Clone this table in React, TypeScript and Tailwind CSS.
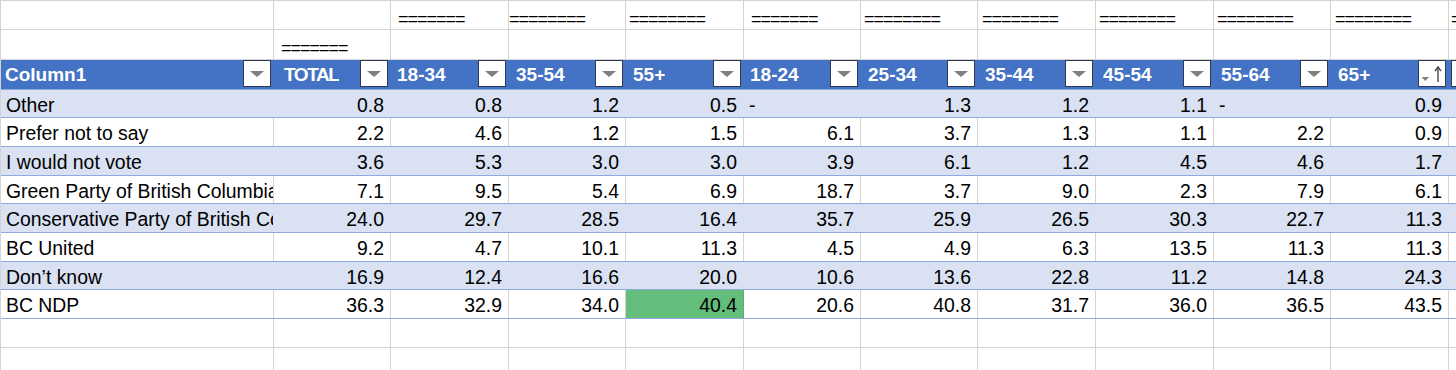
import React from "react";

const W = [
  "w-[273px]",
  "w-[117px]",
  "w-[118px]",
  "w-[117px]",
  "w-[118px]",
  "w-[117px]",
  "w-[117px]",
  "w-[118px]",
  "w-[118px]",
  "w-[117px]",
  "w-[118px]",
  "w-[120px]",
];

const EQ1: (null | { t: string; c: string })[] = [
  null,
  null,
  { t: "=======", c: "pl-[7px]" },
  { t: "========", c: "pl-0" },
  { t: "========", c: "pl-[3px]" },
  { t: "=======", c: "pl-[7px]" },
  { t: "========", c: "pl-[3px]" },
  { t: "========", c: "pl-[4px]" },
  { t: "========", c: "pl-[3px]" },
  { t: "========", c: "pl-[3px]" },
  { t: "========", c: "pl-[4px]" },
  { t: "========", c: "pl-[2px]" },
];

const HEAD: { t: string; c: string }[] = [
  { t: "Column1", c: "pl-[4px]" },
  { t: "TOTAL", c: "pl-[10px] tracking-[-1.4px]" },
  { t: "18-34", c: "pl-[6px]" },
  { t: "35-54", c: "pl-[7px]" },
  { t: "55+", c: "pl-[7px]" },
  { t: "18-24", c: "pl-[6px]" },
  { t: "25-34", c: "pl-[7px]" },
  { t: "35-44", c: "pl-[7px]" },
  { t: "45-54", c: "pl-[7px]" },
  { t: "55-64", c: "pl-[7px]" },
  { t: "65+", c: "pl-[7px]" },
];

const ROWS: string[][] = [
  ["Other", "0.8", "0.8", "1.2", "0.5", "-", "1.3", "1.2", "1.1", "-", "0.9"],
  ["Prefer not to say", "2.2", "4.6", "1.2", "1.5", "6.1", "3.7", "1.3", "1.1", "2.2", "0.9"],
  ["I would not vote", "3.6", "5.3", "3.0", "3.0", "3.9", "6.1", "1.2", "4.5", "4.6", "1.7"],
  ["Green Party of British Columbia", "7.1", "9.5", "5.4", "6.9", "18.7", "3.7", "9.0", "2.3", "7.9", "6.1"],
  ["Conservative Party of British Columbia", "24.0", "29.7", "28.5", "16.4", "35.7", "25.9", "26.5", "30.3", "22.7", "11.3"],
  ["BC United", "9.2", "4.7", "10.1", "11.3", "4.5", "4.9", "6.3", "13.5", "11.3", "11.3"],
  ["Don\u2019t know", "16.9", "12.4", "16.6", "20.0", "10.6", "13.6", "22.8", "11.2", "14.8", "24.3"],
  ["BC NDP", "36.3", "32.9", "34.0", "40.4", "20.6", "40.8", "31.7", "36.0", "36.5", "43.5"],
];

function FilterButton({ sorted }: { sorted?: boolean }) {
  return (
    <div className="mr-[3px] h-[27px] w-[28px] shrink-0 border border-[#2d3a52] bg-white">
      {sorted ? (
        <svg width="26" height="25" viewBox="0 0 26 25">
          <polygon points="2.5,16 10,16 6.25,20" fill="#808080" />
          <line x1="19" y1="6.5" x2="19" y2="21" stroke="#4a4a4a" strokeWidth="1.4" />
          <polyline points="16,10 19,6 22,10" fill="none" stroke="#4a4a4a" strokeWidth="1.4" />
        </svg>
      ) : (
        <svg width="26" height="25" viewBox="0 0 26 25">
          <polygon points="6,10 20,10 13,16" fill="#808080" />
        </svg>
      )}
    </div>
  );
}

function EqRow({ cells }: { cells: (null | { t: string; c: string })[] }) {
  return (
    <div className="flex h-[29.3px] border-b border-[#D4D4D4] bg-white">
      {cells.map((c, i) => (
        <div
          key={i}
          className={`${W[i]} h-full shrink-0 overflow-hidden whitespace-nowrap border-r border-[#D4D4D4] pt-[7px] text-[18px] leading-[22px] tracking-[-1px] ${c ? c.c : ""}`}
        >
          {c ? c.t : ""}
        </div>
      ))}
    </div>
  );
}

export default function App() {
  const row2: (null | { t: string; c: string })[] = W.map((_, i) =>
    i === 1 ? { t: "=======", c: "pl-[7px]" } : null
  );
  return (
    <div className="h-[370px] w-[1456px] overflow-hidden bg-white font-['Liberation_Sans',Arial,sans-serif] text-black">
      <div className="w-max border-l border-t border-[#D4D4D4]">
        <EqRow cells={EQ1} />
        <EqRow cells={row2} />

        {/* header */}
        <div className="flex h-[30px] border-b border-[#8EA9DB] bg-[#4472C4]">
          {W.map((w, i) => {
            const h = HEAD[i];
            if (!h) {
              return (
                <div key={i} className={`${w} flex h-full shrink-0 items-start pl-[2px]`}>
                  <div className="h-[27px] w-[28px] shrink-0 border border-[#2d3a52] bg-white" />
                </div>
              );
            }
            return (
              <div key={i} className={`${w} flex h-full shrink-0 items-start justify-between`}>
                <span
                  className={`overflow-hidden whitespace-nowrap pt-[4.5px] text-[19px] font-bold leading-[22px] text-white ${h.c}`}
                >
                  {h.t}
                </span>
                <FilterButton sorted={i === 10} />
              </div>
            );
          })}
        </div>

        {ROWS.map((r, ri) => {
          const banded = ri % 2 === 0;
          return (
            <div
              key={ri}
              className={`flex h-[28.7px] border-b border-[#8EA9DB] ${banded ? "bg-[#D9E1F2]" : "bg-white"}`}
            >
              {W.map((w, ci) => {
                const v = ci < r.length ? r[ci] : "";
                const green = ri === 7 && ci === 4;
                const border = green
                  ? "bg-[#63BE7B] border-[#57AE6E]"
                  : banded || ci === W.length - 1
                  ? "border-transparent"
                  : "border-[#D4D4D4]";
                const align =
                  ci === 0 ? "pl-[5px] text-left" : v === "-" ? "pl-[5px] text-left" : "pr-[6px] text-right";
                return (
                  <div
                    key={ci}
                    className={`${w} h-full shrink-0 overflow-hidden whitespace-nowrap border-r pt-[4px] text-[19.4px] leading-[22px] ${border} ${align}`}
                  >
                    {v}
                  </div>
                );
              })}
            </div>
          );
        })}

        {[0, 1].map((k) => (
          <div key={k} className="flex h-[28.7px] border-b border-[#D4D4D4] bg-white">
            {W.map((w, ci) => (
              <div key={ci} className={`${w} h-full shrink-0 border-r border-[#D4D4D4]`} />
            ))}
          </div>
        ))}
      </div>
    </div>
  );
}
